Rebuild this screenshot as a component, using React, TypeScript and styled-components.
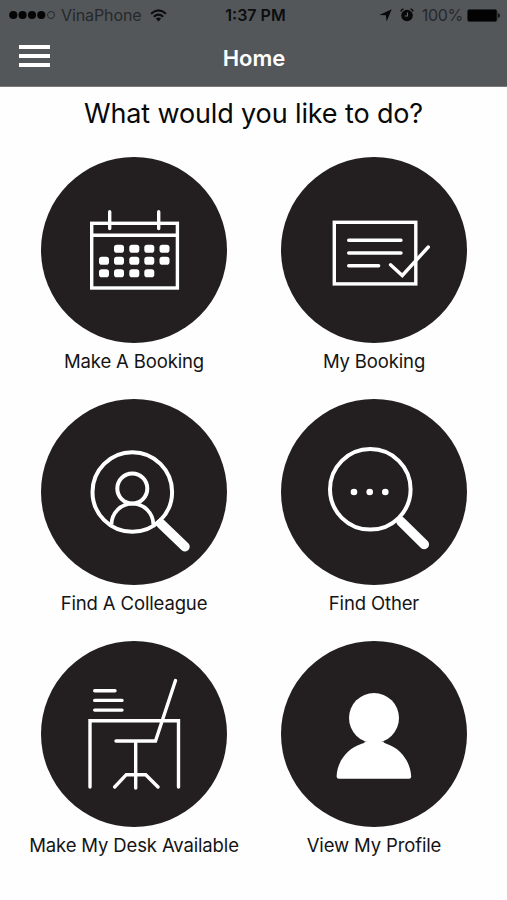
import React from "react";
import styled, { createGlobalStyle } from "styled-components";

const GlobalStyle = createGlobalStyle`
  body {
    margin: 0;
    background: #fefefe;
    font-family: Inter, "Liberation Sans", sans-serif;
    color: #141414;
  }
`;

const Screen = styled.div`
  width: 507px;
  height: 900px;
  overflow: hidden;
`;

const Header = styled.header`
  height: 87px;
  box-sizing: border-box;
  background: #54575a;
  border-bottom: 1px solid #77797b;
`;

const StatusBar = styled.div`
  display: grid;
  grid-template-columns: 1fr auto 1fr;
  align-items: center;
  height: 30px;
  padding: 0 7px 0 9px;
  color: #0c0d0e;
  font-size: 16px;
  line-height: 30px;
  white-space: nowrap;
`;

const StatusGroup = styled.div<{ $end?: boolean }>`
  display: flex;
  align-items: center;
  justify-content: ${(p) => (p.$end ? "flex-end" : "flex-start")};
`;

const Signal = styled.svg`
  width: 47px;
  height: 10px;
  margin-right: 5px;
`;

const Carrier = styled.span`
  color: #25282a;
  letter-spacing: -0.1px;
  margin-right: 8px;
`;

const Clock = styled.span`
  font-weight: 600;
  margin-left: 2px;
`;

const Percent = styled.span`
  color: #25282a;
  letter-spacing: -0.3px;
  margin: 0 4px 0 8px;
`;

const NavBar = styled.nav`
  display: grid;
  grid-template-columns: 1fr auto 1fr;
  align-items: center;
  height: 56px;
  padding: 0 18px 0 19px;
`;

const MenuButton = styled.button`
  width: 31px;
  height: 22px;
  margin-bottom: 4px;
  padding: 0;
  border: 0;
  background: none;
  display: flex;
  flex-direction: column;
  justify-content: space-between;
`;

const MenuBar = styled.span`
  height: 4px;
  width: 31px;
  background: #fff;
`;

const Title = styled.h1`
  margin: 0;
  color: #fff;
  font-size: 22px;
  font-weight: 600;
  line-height: 28px;
`;

const Question = styled.h2`
  margin: 0;
  height: 70px;
  line-height: 54px;
  font-size: 27px;
  font-weight: 400;
  letter-spacing: -0.13px;
  text-align: center;
  color: #090909;
  white-space: nowrap;
`;

const Actions = styled.main`
  display: grid;
  grid-template-columns: 240px 240px;
  grid-auto-rows: 242px;
  margin-left: 14px;
`;

const Action = styled.div`
  display: flex;
  flex-direction: column;
  align-items: center;
`;

const Disc = styled.svg`
  width: 186px;
  height: 186px;
  flex: none;
  border-radius: 50%;
  background: #231f20;
  fill: none;
  stroke: #fff;
  stroke-width: 3.4;
  stroke-linecap: round;
  stroke-linejoin: miter;
`;

const Label = styled.span`
  line-height: 36px;
  font-size: 18.5px;
  letter-spacing: -0.14px;
  white-space: nowrap;
`;

const calendarDays: [number, number][] = [
  [78, 91.7], [93.3, 91.7], [108.3, 91.7], [123.5, 91.7],
  [63, 103.7], [78, 103.7], [93.3, 103.7], [108.3, 103.7], [123.5, 103.7],
  [63, 116.2], [78, 116.2], [93.3, 116.2], [108.3, 116.2],
];

const Calendar = () => (
  <>
    <rect x="50.7" y="66.3" width="85.7" height="64.7" />
    <path d="M51 78.3H136M68.7 54.8V71.5M117.7 54.8V71.5" />
    {calendarDays.map(([x, y]) => (
      <rect key={`${x}-${y}`} x={x - 5} y={y - 4} width="10" height="8" rx="2.8" fill="#fff" stroke="none" />
    ))}
  </>
);

const Checklist = () => (
  <>
    <rect x="53.3" y="65.3" width="81.5" height="61.6" />
    <path d="M67.7 83.3H120M67.7 96H120M67.7 108.7H97.7M109.5 107.8L121.3 118.5L147.3 90" />
  </>
);

const Colleague = () => (
  <>
    <circle cx="91.3" cy="93" r="39.8" strokeWidth="4" />
    <circle cx="91.3" cy="89.5" r="15" strokeWidth="4" />
    <path d="M70.500 125.500A20.900 20.900 0 0 1 112.300 125.500" strokeWidth="3.800" strokeLinecap="butt" />
    <path d="M120 124.8L144 147.7" strokeWidth="9.5" />
    <path d="M116.5 121.2L123 127.3" strokeWidth="7" strokeLinecap="butt" />
  </>
);

const SearchOther = () => (
  <>
    <circle cx="89.3" cy="90.3" r="40.3" strokeWidth="4" />
    <g fill="#fff" stroke="none">
      <circle cx="73" cy="93" r="3.3" />
      <circle cx="88.7" cy="93" r="3.3" />
      <circle cx="104.3" cy="93" r="3.3" />
    </g>
    <path d="M119.8 122.3L143.3 145.5" strokeWidth="9.5" />
  </>
);

const Desk = () => (
  <path d="M53.7 49.7H74M53.7 59.4H81M53.7 69.1H81M49 146V79.7H137.5V146M134.5 39.5L114.5 100H75M94.7 100V147M73.7 146L85.3 133.7H104.7L117 146" />
);

const Profile = () => (
  <g fill="#fff" stroke="none">
    <circle cx="93" cy="77" r="25" />
    <path d="M83 100.5C85 101.5 82 102 80 103C66 107.5 56 121 55.6 135.5Q55.6 137.8 58 137.8H128Q130.3 137.8 130.2 135.5C129.5 121 120 107.5 106 103C104 102 101.5 101.5 103 100.5Z" />
  </g>
);

const actions = [
  { label: "Make A Booking", icon: <Calendar /> },
  { label: "My Booking", icon: <Checklist /> },
  { label: "Find A Colleague", icon: <Colleague /> },
  { label: "Find Other", icon: <SearchOther /> },
  { label: "Make My Desk Available", icon: <Desk /> },
  { label: "View My Profile", icon: <Profile /> },
];

const WifiIcon = () => (
  <svg width="17" height="13" viewBox="0 0 17 13" fill="none" stroke="#0b0c0d" strokeWidth="2">
    <path d="M1 4.7Q8.5 -2 16 4.7M3.8 7.7Q8.5 3.6 13.2 7.7" />
    <path d="M8.5 12.4L5.8 9.6Q8.5 7.3 11.2 9.6Z" fill="#0b0c0d" stroke="none" />
  </svg>
);

const LocationIcon = () => (
  <svg width="13" height="13" viewBox="0 0 13 13" fill="#080909">
    <path d="M12.7 .3L7.6 12.5L6.9 6.3L.3 5.9Z" />
  </svg>
);

const AlarmIcon = styled.svg`
  width: 14px;
  height: 14px;
  margin-left: 8px;
`;

const BatteryIcon = () => (
  <svg width="33" height="13" viewBox="0 0 33 13">
    <rect x=".5" y=".5" width="29.5" height="12" rx="2" fill="#030303" stroke="#25282a" />
    <path d="M31 4Q33 4.5 33 6.5T31 9Z" fill="#111" />
  </svg>
);

export default function App() {
  return (
    <>
      <GlobalStyle />
      <Screen>
        <Header>
          <StatusBar>
            <StatusGroup>
              <Signal viewBox="0 0 47 10">
                {[4.3, 13.6, 23, 32.3].map((x) => (
                  <circle key={x} cx={x} cy="5" r="4.1" fill="#050505" />
                ))}
                <circle cx="42" cy="5" r="3.5" fill="none" stroke="#25282a" />
              </Signal>
              <Carrier>VinaPhone</Carrier>
              <WifiIcon />
            </StatusGroup>
            <Clock>1:37 PM</Clock>
            <StatusGroup $end>
              <LocationIcon />
              <AlarmIcon viewBox="0 0 14 14">
                <circle cx="7" cy="7.5" r="5.8" fill="#080909" />
                <path d="M.8 3.5Q1.3 1.2 3.5 .8M10.5 .8Q12.7 1.2 13.2 3.5" fill="none" stroke="#080909" strokeWidth="1.3" />
                <path d="M7.5 4.5V8H4.8" fill="none" stroke="#65686a" strokeWidth="1.1" />
              </AlarmIcon>
              <Percent>100%</Percent>
              <BatteryIcon />
            </StatusGroup>
          </StatusBar>
          <NavBar>
            <MenuButton aria-label="Menu">
              <MenuBar />
              <MenuBar />
              <MenuBar />
            </MenuButton>
            <Title>Home</Title>
          </NavBar>
        </Header>
        <Question>What would you like to do?</Question>
        <Actions>
          {actions.map(({ label, icon }) => (
            <Action key={label}>
              <Disc viewBox="0 0 186 186">{icon}</Disc>
              <Label>{label}</Label>
            </Action>
          ))}
        </Actions>
      </Screen>
    </>
  );
}
